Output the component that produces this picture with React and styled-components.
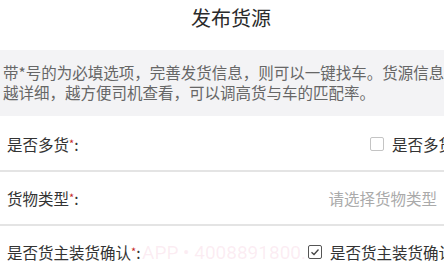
import styled, { createGlobalStyle } from "styled-components";

const GlobalStyle = createGlobalStyle`
  body {
    margin: 0;
    background: #fff;
    overflow: hidden;
    font-family: "Noto Sans CJK SC", "Noto Sans", sans-serif;
  }
`;

const Page = styled.div`
  width: 444px;
`;

const Header = styled.header`
  height: 50px;
  display: flex;
  justify-content: center;
  padding-top: 4px;
  box-sizing: border-box;
`;

const Title = styled.h1`
  margin: 0;
  font-size: 20px;
  line-height: 28px;
  font-weight: 400;
  color: #2b2b2b;
  padding-left: 18px;
`;

const Notice = styled.p`
  margin: 0;
  background: #f3f3f5;
  padding: 12px 0 14px 3px;
  font-size: 15.5px;
  line-height: 20px;
  color: #666;
  white-space: nowrap;
`;

const Form = styled.div`
  padding-top: 2px;
`;

const Row = styled.div`
  position: relative;
  height: 52px;
  display: flex;
  align-items: center;
  justify-content: space-between;
  padding: 0 7px;
  border-bottom: ${(p) => (p.$last ? "none" : "2px solid #e4e4e4")};
`;

const Label = styled.span`
  font-size: 15.5px;
  color: #333;
  white-space: nowrap;
  position: relative;
  z-index: 1;
`;

const Star = styled.span`
  color: #c62828;
  font-size: 11px;
  vertical-align: 3px;
`;

const CheckLabel = styled.label`
  position: relative;
  z-index: 1;
  display: flex;
  align-items: center;
  gap: 8px;
  margin-right: -17px;
  padding-left: 2px;
  background: #fff;
  font-size: 15.5px;
  color: #333;
  white-space: nowrap;
`;

const Box = styled.span`
  width: 14px;
  height: 14px;
  box-sizing: border-box;
  border: 1px solid ${(p) => (p.$checked ? "#555" : "#c4c4c4")};
  border-radius: 2px;
  display: flex;
  align-items: center;
  justify-content: center;
  background: #fff;
`;

const Placeholder = styled.span`
  font-size: 15.5px;
  color: #aaa;
`;

const Watermark = styled.span`
  position: absolute;
  left: 142px;
  top: 50%;
  transform: translateY(-50%);
  font-family: Roboto, "Noto Sans", sans-serif;
  font-size: 19px;
  color: rgba(240, 170, 200, 0.22);
  white-space: nowrap;
  pointer-events: none;
`;

const Checkbox = ({ checked, children }) => (
  <CheckLabel>
    <Box $checked={checked}>
      {checked && (
        <svg width="10" height="10" viewBox="0 0 10 10">
          <path d="M1.5 5.2 L4 7.5 L8.5 2.5" fill="none" stroke="#444" strokeWidth="1.3" />
        </svg>
      )}
    </Box>
    {children}
  </CheckLabel>
);

const Required = ({ children }) => (
  <Label>
    {children}
    <Star>*</Star>:
  </Label>
);

export default function App() {
  return (
    <Page>
      <GlobalStyle />
      <Header>
        <Title>发布货源</Title>
      </Header>
      <Notice>
        带*号的为必填选项，完善发货信息，则可以一键找车。货源信息
        <br />
        越详细，越方便司机查看，可以调高货与车的匹配率。
      </Notice>
      <Form>
        <Row>
          <Required>是否多货</Required>
          <Checkbox>是否多货</Checkbox>
        </Row>
        <Row>
          <Required>货物类型</Required>
          <Placeholder>请选择货物类型</Placeholder>
        </Row>
        <Row $last>
          <Required>是否货主装货确认</Required>
          <Watermark>APP • 4008891800.COM</Watermark>
          <Checkbox checked>是否货主装货确认</Checkbox>
        </Row>
      </Form>
    </Page>
  );
}
